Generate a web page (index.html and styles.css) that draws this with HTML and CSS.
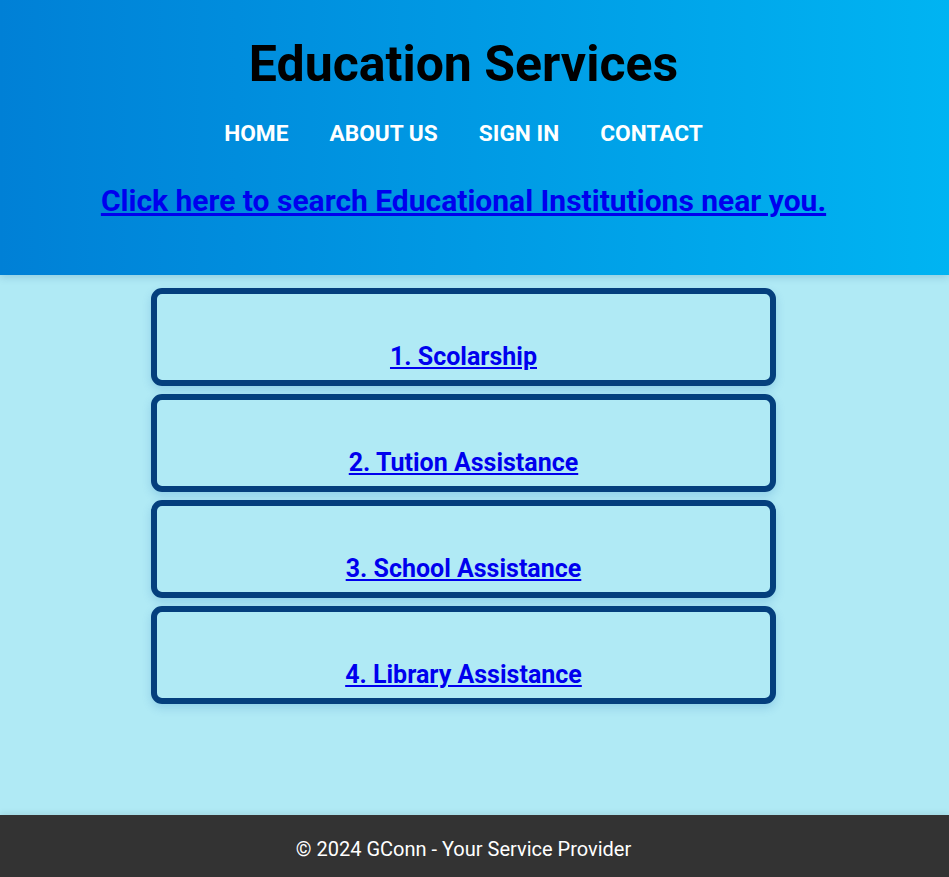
FILE: index.html
```html
<!DOCTYPE html>
<html lang="en">
<head>
<meta charset="utf-8">
<title>Education Services</title>
<link rel="stylesheet" href="styles.css">
</head>
<body>
<header class="site-header">
  <div class="inner">
    <h1 class="title">Education Services</h1>
    <nav class="nav">
      <a href="#">HOME</a>
      <a href="#">ABOUT US</a>
      <a href="#">SIGN IN</a>
      <a href="#">CONTACT</a>
    </nav>
    <a class="search-link" href="#">Click here to search Educational Institutions near you.</a>
  </div>
</header>
<main class="main">
  <div class="cards">
    <div class="card"><a href="#">1. Scolarship</a></div>
    <div class="card"><a href="#">2. Tution Assistance</a></div>
    <div class="card"><a href="#">3. School Assistance</a></div>
    <div class="card"><a href="#">4. Library Assistance</a></div>
  </div>
</main>
<footer class="site-footer">
  <p class="inner">&copy; 2024 GConn - Your Service Provider</p>
</footer>
</body>
</html>
```
FILE: styles.css
```css
* { box-sizing: border-box; }
html, body { margin: 0; padding: 0; }
body {
  font-family: Roboto, "Noto Sans", Arial, sans-serif;
  background: #b0eaf5;
}
.inner {
  padding-right: 22px;
  text-align: center;
}
.site-header {
  background: linear-gradient(to right, #0080d6, #00b4f2);
  padding: 36px 0 56px;
  position: relative;
  z-index: 1;
  box-shadow: 0 2px 8px rgba(0, 60, 120, 0.18);
}
.title {
  margin: 0;
  font-size: 50px;
  line-height: 56px;
  font-weight: 700;
  color: #000;
}
.nav {
  margin-top: 28px;
  display: flex;
  justify-content: center;
  gap: 41px;
  line-height: 28px;
}
.nav a {
  color: #fff;
  text-decoration: none;
  font-weight: 700;
  font-size: 22.7px;
}
.search-link {
  display: inline-block;
  margin-top: 35px;
  font-size: 30px;
  line-height: 36px;
  font-weight: 700;
  color: #0000ee;
}
.main {
  min-height: 540px;
  padding-top: 13px;
}
.cards {
  width: 625px;
  margin-left: 151px;
  display: flex;
  flex-direction: column;
  gap: 8px;
}
.card {
  height: 98px;
  border: 6px solid #043f7d;
  border-radius: 11px;
  box-shadow: 0 4px 10px rgba(0, 90, 180, 0.18);
  text-align: center;
  padding-top: 48px;
}
.card a {
  font-size: 25px;
  line-height: 30px;
  font-weight: 700;
  color: #0000ee;
}
.site-footer {
  background: #333;
  height: 62px;
  padding-top: 6px;
  box-shadow: 0 -2px 6px rgba(0, 0, 0, 0.08);
}
.site-footer p {
  margin: 0;
  color: #fff;
  font-size: 20px;
  line-height: 56px;
}
```
